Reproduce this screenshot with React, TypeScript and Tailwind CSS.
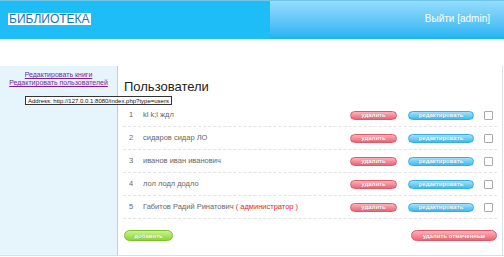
const users = [
  { id: 1, name: "kl k;l ждл", admin: false },
  { id: 2, name: "сидаров сидар ЛО", admin: false },
  { id: 3, name: "иванов иван иванович", admin: false },
  { id: 4, name: "лол лодл додло", admin: false },
  { id: 5, name: "Габитов Радий Ринатович", admin: true },
];

function Pill({ label, color, className = "" }: { label: string; color: "red" | "blue" | "green"; className?: string }) {
  const tone =
    color === "red"
      ? "bg-gradient-to-b from-[#fbb3bd] to-[#ec6475] border-[#de5b6b]"
      : color === "blue"
        ? "bg-gradient-to-b from-[#9fe2fc] to-[#3bbcf2] border-[#35ace4]"
        : "bg-gradient-to-b from-[#cdf28a] to-[#8cd636] border-[#7cc12c]";
  return (
    <span
      className={`flex items-center justify-center rounded-full border text-white font-bold text-[6px] leading-none [text-shadow:0_0_1px_rgba(0,0,0,0.35)] ${tone} ${className}`}
    >
      {label}
    </span>
  );
}

export default function App() {
  return (
    <div className="relative w-[504px] h-[257px] overflow-hidden bg-white font-['Liberation_Sans',Arial,sans-serif]">
      {/* header */}
      <div className="flex h-[39px] border-t border-[#6fc6e8]">
        <div className="w-[270px] bg-[#1fbdf7] pt-[5px] pl-[8px]">
          <span className="inline-block bg-white px-[1px] text-[12px] leading-[12px] text-[#1877b8]">БИБЛИОТЕКА</span>
        </div>
        <div className="flex-1 flex items-start justify-end pt-[12px] pr-[14px] bg-gradient-to-b from-[#93dcfb] to-[#16b3f3]">
          <span className="text-[10px] leading-[12px] text-white">Выйти [admin]</span>
        </div>
      </div>

      <div className="h-[27px]" />

      {/* body */}
      <div className="flex h-[190px] border-b border-[#cfe3ee]">
        <div className="w-[118px] border-r border-[#c8ced2] bg-[#e6f4fb] pt-[5px] flex flex-col items-center">
          <a className="text-[7px] leading-[8px] text-[#7a1fa0] underline">Редактировать книги</a>
          <a className="text-[7px] leading-[8px] text-[#7a1fa0] underline">Редактировать пользователей</a>
        </div>

        <div className="w-[385px] border-r border-[#d7e3ea] pl-[5px] pr-[5px] pt-[13px]">
          <h1 className="h-[16px] text-[13px] leading-[16px] text-[#222] pl-[1px]">Пользователи</h1>
          <div className="mt-[9px]">
            {users.map((u) => (
              <div key={u.id} className="flex items-center h-[23px] border-b border-dashed border-[#e3e3e3]">
                <span className="w-[14px] ml-[6px] text-[7.5px] text-[#666]">{u.id}</span>
                <span className="flex-1 text-[7.5px] text-[#666]">
                  {u.name}
                  {u.admin && <span className="text-[#e3242b]"> ( администратор )</span>}
                </span>
                <Pill label="удалить" color="red" className="w-[47px] h-[9px]" />
                <Pill label="редактировать" color="blue" className="w-[66px] h-[9px] ml-[11px]" />
                <span className="w-[9px] h-[9px] ml-[10px] mr-[4px] rounded-[1px] border border-[#aaa] bg-white" />
              </div>
            ))}
          </div>
          <div className="flex justify-between mt-[11px] pl-[1px]">
            <Pill label="добавить" color="green" className="w-[49px] h-[11px]" />
            <Pill label="удалить отмеченные" color="red" className="w-[86px] h-[11px]" />
          </div>
        </div>
      </div>

      {/* status tooltip */}
      <div className="absolute left-[25px] top-[96px] h-[9px] border border-[#333] bg-white flex items-center px-[2px]">
        <span className="text-[6px] leading-none text-[#111] whitespace-nowrap">Address: http://127.0.0.1:8080/index.php?type=users</span>
      </div>
    </div>
  );
}
